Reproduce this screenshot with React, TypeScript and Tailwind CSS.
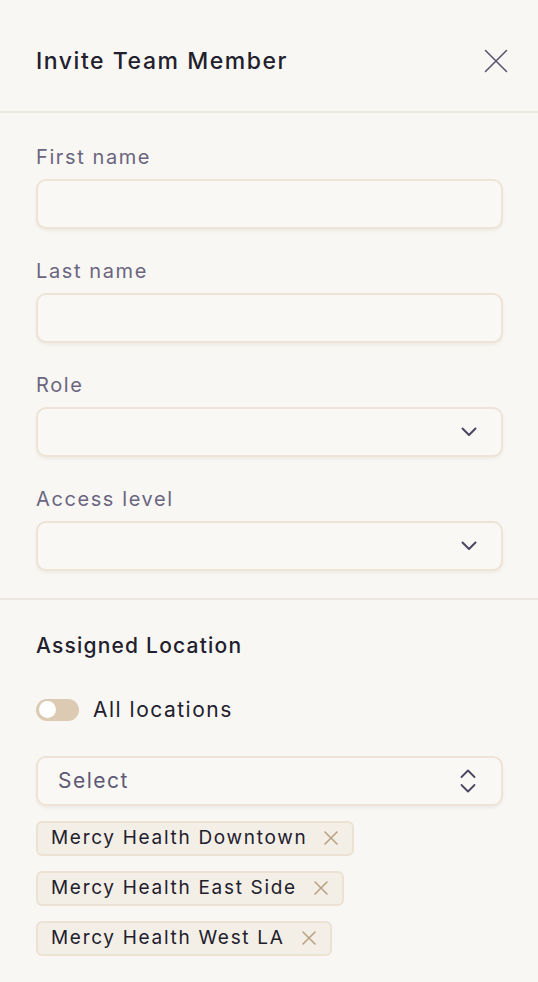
import React from "react";

const Chevron = () => (
  <svg width="16" height="10" viewBox="0 0 16 10" fill="none" stroke="#4a4560" strokeWidth="2" strokeLinecap="round" strokeLinejoin="round">
    <path d="M1.5 1.5l6.5 6.5 6.5-6.5" />
  </svg>
);

const UpDown = () => (
  <svg width="16" height="24" viewBox="0 0 16 24" fill="none" stroke="#4a4560" strokeWidth="1.8" strokeLinecap="round" strokeLinejoin="round">
    <path d="M1.5 8l6.5-6.5 6.5 6.5" />
    <path d="M1.5 16l6.5 6.5 6.5-6.5" />
  </svg>
);

const SmallX = () => (
  <svg width="16" height="16" viewBox="0 0 16 16" fill="none" stroke="#b9a283" strokeWidth="1.6" strokeLinecap="round">
    <path d="M2 2l12 12M14 2L2 14" />
  </svg>
);

const Field = ({ label, select }: { label: string; select?: boolean }) => (
  <div className="flex flex-col">
    <div className="text-[20px] leading-[24px] text-[#6b6580] tracking-[1.6px]">{label}</div>
    <div className="mt-[10px] h-[50px] rounded-[10px] border-2 border-[#ede3d6] bg-[#f9f8f4] shadow-[0_2px_3px_rgba(180,160,130,0.12)] flex items-center justify-end pr-[24px]">
      {select && <Chevron />}
    </div>
  </div>
);

export default function App() {
  return (
    <div className="w-[538px] min-h-[982px] bg-[#f8f7f3] text-[#22202d]" style={{ fontFamily: "Inter, 'Open Sans', sans-serif" }}>
      <div className="h-[113px] flex items-start justify-between pt-[46px] pl-[36px] pr-[30px] border-b-2 border-[#ede8df]">
        <div className="text-[23px] leading-[30px] font-[450] tracking-[1.55px] text-[#22202d]">Invite Team Member</div>
        <svg className="mt-[3px]" width="24" height="24" viewBox="0 0 24 24" fill="none" stroke="#5a5570" strokeWidth="1.6" strokeLinecap="round">
          <path d="M1.5 1.5l21 21M22.5 1.5l-21 21" />
        </svg>
      </div>
      <div className="pl-[36px] pr-[35px] pt-[32px] pb-[27px] flex flex-col gap-[30px] border-b-2 border-[#ede8df]">
        <Field label="First name" />
        <Field label="Last name" />
        <Field label="Role" select />
        <Field label="Access level" select />
      </div>
      <div className="pl-[36px] pr-[35px] pt-[32px]">
        <div className="text-[21px] font-[450] tracking-[1.2px] leading-[28px]">Assigned Location</div>
        <div className="mt-[34px] flex items-center gap-[14px]">
          <div className="w-[43px] h-[22px] rounded-full bg-[#dccbb2] p-[3px] flex items-center">
            <div className="w-[17px] h-[17px] rounded-full bg-white" />
          </div>
          <div className="text-[21px] tracking-[1.5px]">All locations</div>
        </div>
        <div className="mt-[30px] h-[50px] rounded-[10px] border-2 border-[#ede3d6] bg-[#f9f8f4] shadow-[0_2px_3px_rgba(180,160,130,0.12)] flex items-center justify-between pl-[20px] pr-[25px]">
          <span className="text-[21px] tracking-[1.5px] text-[#5d5876]">Select</span>
          <UpDown />
        </div>
        <div className="mt-[15px] flex flex-col items-start gap-[15px]">
          {["Mercy Health Downtown", "Mercy Health East Side", "Mercy Health West LA"].map((t) => (
            <div key={t} className="h-[35px] rounded-[6px] border-2 border-[#ece2d3] bg-[#f3efe7] flex items-center pl-[13px] pr-[13px] gap-[16px]">
              <span className="text-[19px] tracking-[1.7px] text-[#22202d]">{t}</span>
              <SmallX />
            </div>
          ))}
        </div>
      </div>
    </div>
  );
}
